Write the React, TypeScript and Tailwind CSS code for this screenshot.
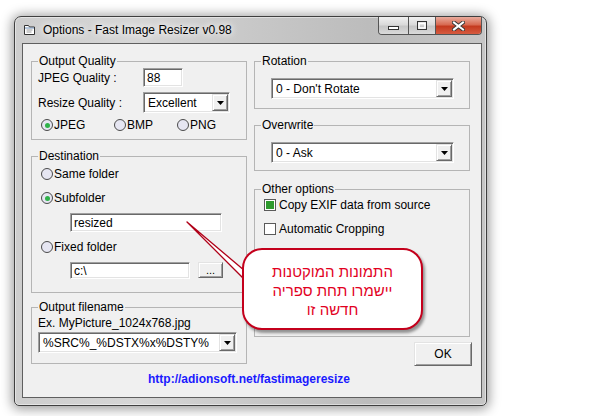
import type { ReactNode } from "react";

const sunken =
  "border border-t-[#a0a0a0] border-l-[#a0a0a0] border-b-white border-r-white shadow-[inset_1px_1px_0_#696969,inset_-1px_-1px_0_#e3e3e3] bg-white";
const raised =
  "border border-t-[#e3e3e3] border-l-[#e3e3e3] border-b-[#696969] border-r-[#696969] shadow-[inset_1px_1px_0_#fff,inset_-1px_-1px_0_#a0a0a0] bg-[#f0f0f0]";

function GroupBox({
  title,
  className = "",
  children,
}: {
  title: string;
  className?: string;
  children: ReactNode;
}) {
  return (
    <fieldset className={`min-w-0 border border-[#b5b5b5] px-[6px] ${className}`}>
      <legend className="px-[1px] text-[12px] leading-[14px]">{title}</legend>
      {children}
    </fieldset>
  );
}

function Radio({ checked = false, label }: { checked?: boolean; label: string }) {
  return (
    <span className="flex h-[14px] items-center gap-[1px]">
      <span className="grid size-[12px] shrink-0 place-items-center rounded-full border border-[#4a4a4a] bg-[#e6e6f2]">
        {checked && <span className="size-[5px] rounded-full bg-[#2fb24a]" />}
      </span>
      <span>{label}</span>
    </span>
  );
}

function Check({ checked = false, label }: { checked?: boolean; label: string }) {
  return (
    <span className="flex h-[14px] items-center gap-[3px]">
      <span className="grid size-[12px] shrink-0 place-items-center border border-[#5a5a5a] bg-white">
        {checked && <span className="size-[8px] bg-[#2e9a2e]" />}
      </span>
      <span>{label}</span>
    </span>
  );
}

function Combo({ value, className = "" }: { value: string; className?: string }) {
  return (
    <div className={`flex items-stretch ${sunken} ${className}`}>
      <span className="flex flex-1 items-center truncate pl-[4px]">{value}</span>
      <span className={`m-[1px] grid w-[16px] place-items-center ${raised}`}>
        <svg width="7" height="4" viewBox="0 0 7 4">
          <path d="M0 0h7L3.5 4z" fill="#000" />
        </svg>
      </span>
    </div>
  );
}

function TitleIcon() {
  return (
    <svg width="11" height="10" viewBox="0 0 11 10" className="shrink-0">
      <path d="M0.5 0.5h4l1 1.5h5v7.5h-10z" fill="#fff" stroke="#333" />
      <path d="M1 3h9" stroke="#6f8fb8" />
      <path d="M2.5 5h6M2.5 7h5" stroke="#9a9a9a" />
    </svg>
  );
}

export default function App() {
  return (
    <div className="relative h-[416px] w-[613px] overflow-hidden bg-white font-['Liberation_Sans',Arial,sans-serif] text-[12px] leading-[14px] text-black">
      <div className="ml-[14px] mt-[16px] flex h-[390px] w-[473px] flex-col rounded-t-[7px] rounded-b-[5px] border border-[#3f3f3f] bg-[linear-gradient(90deg,#cdcdcd_0%,#d6d6d6_25%,#c8c8c8_50%,#bcbcbc_75%,#c6c6c6_100%)] pb-[7px] pl-[7px] pr-[4px] shadow-[0_1px_12px_2px_rgba(0,0,0,0.4),inset_0_0_0_1px_rgba(255,255,255,0.45)]">
        <div className="flex h-[26px] items-center pl-[2px]">
          <TitleIcon />
          <span className="ml-[8px] pb-[1px] text-[12px] [text-shadow:0_0_6px_#fff,0_0_10px_#fff]">
            Options - Fast Image Resizer v0.98
          </span>
          <div className="ml-auto flex h-[18px] self-start overflow-hidden rounded-b-[4px] border border-t-0 border-[#555]">
            <span className="grid w-[29px] place-items-center bg-[linear-gradient(#f0f0f0,#dadada_45%,#c6c6c6_55%,#dadada)] pt-[5px]">
              <svg width="11" height="4" viewBox="0 0 11 4">
                <rect x="0.5" y="0.5" width="10" height="3" fill="#fff" stroke="#333" />
              </svg>
            </span>
            <span className="grid w-[27px] place-items-center border-l border-[#555] bg-[linear-gradient(#f0f0f0,#dadada_45%,#c6c6c6_55%,#dadada)]">
              <svg width="10" height="9" viewBox="0 0 10 9">
                <rect x="0.5" y="0.5" width="9" height="8" fill="none" stroke="#333" />
                <rect x="2" y="2.5" width="6" height="4.5" fill="none" stroke="#fff" strokeWidth="1.5" />
              </svg>
            </span>
            <span className="grid w-[46px] place-items-center border-l border-[#555] bg-[linear-gradient(#e9ab9d,#d86a52_45%,#c43a1f_55%,#d65b40)]">
              <svg width="13" height="10" viewBox="0 0 13 10">
                <path d="M2 1.5l9 7M11 1.5l-9 7" stroke="#3a3a3a" strokeWidth="4" strokeLinecap="square" />
                <path d="M2 1.5l9 7M11 1.5l-9 7" stroke="#fff" strokeWidth="2" strokeLinecap="square" />
              </svg>
            </span>
          </div>
        </div>

        <div className="flex flex-1 flex-col border border-[#5f5f5f] bg-[#f0f0f0] pl-[8px] pt-[10px]">
          <div className="grid grid-cols-[216px_216px] gap-x-[7px]">
            <div className="flex flex-col">
              <GroupBox title="Output Quality" className="pb-[7px]">
                <div className="flex h-[18px] items-center pt-[1px]">
                  <span className="w-[105px]">JPEG Quality :</span>
                  <span className={`flex h-[19px] w-[40px] items-center pl-[3px] ${sunken}`}>88</span>
                </div>
                <div className="mt-[6px] flex h-[21px] items-center">
                  <span className="w-[105px]">Resize Quality :</span>
                  <Combo value="Excellent" className="h-[21px] w-[87px]" />
                </div>
                <div className="ml-[3px] mt-[5px] flex">
                  <span className="w-[73px]">
                    <Radio checked label="JPEG" />
                  </span>
                  <span className="w-[63px]">
                    <Radio label="BMP" />
                  </span>
                  <Radio label="PNG" />
                </div>
              </GroupBox>

              <GroupBox title="Destination" className="mt-[9px] pb-[13px]">
                <div className="ml-[3px] pt-[4px]">
                  <Radio label="Same folder" />
                </div>
                <div className="ml-[3px] mt-[10px]">
                  <Radio checked label="Subfolder" />
                </div>
                <div className={`ml-[32px] mt-[8px] flex h-[19px] w-[152px] items-center pl-[3px] ${sunken}`}>
                  resized
                </div>
                <div className="ml-[3px] mt-[8px]">
                  <Radio label="Fixed folder" />
                </div>
                <div className="ml-[32px] mt-[8px] flex h-[17px] items-start gap-[8px]">
                  <span className={`flex h-[17px] w-[120px] items-center pl-[3px] ${sunken}`}>c:\</span>
                  <span className={`grid h-[16px] w-[25px] place-items-center pb-[4px] text-[11px] ${raised}`}>
                    ...
                  </span>
                </div>
              </GroupBox>

              <GroupBox title="Output filename" className="mt-[7px] pb-[10px]">
                <div className="pt-[2px]">Ex. MyPicture_1024x768.jpg</div>
                <Combo value="%SRC%_%DSTX%x%DSTY%" className="mt-[2px] h-[21px] w-[199px]" />
              </GroupBox>
            </div>

            <div className="flex flex-col">
              <GroupBox title="Rotation" className="pb-[9px]">
                <Combo value="0 - Don't Rotate" className="ml-[10px] mt-[10px] h-[21px] w-[183px]" />
              </GroupBox>
              <GroupBox title="Overwrite" className="mt-[9px] pb-[7px]">
                <Combo value="0 - Ask" className="ml-[10px] mt-[10px] h-[21px] w-[183px]" />
              </GroupBox>
              <GroupBox title="Other options" className="mt-[11px] h-[155px]">
                <div className="ml-[3px] pt-[2px]">
                  <Check checked label="Copy EXIF data from source" />
                </div>
                <div className="ml-[3px] mt-[10px]">
                  <Check label="Automatic Cropping" />
                </div>
              </GroupBox>
              <button
                className={`-mr-[2px] mt-[5px] h-[24px] w-[58px] self-end text-[12px] ${raised}`}
              >
                OK
              </button>
            </div>
          </div>
          <a className="ml-[117px] mt-[6px] font-bold text-[#1a1aff]">
            http://adionsoft.net/fastimageresize
          </a>
        </div>
      </div>

      <svg className="absolute left-0 top-0" width="613" height="416" viewBox="0 0 613 416">
        <path d="M189 224L247 274L247 283Z" fill="#777" opacity="0.45" />
        <path d="M187 222L245 271L245 280Z" fill="#fff" stroke="#b00018" strokeWidth="1.3" strokeLinejoin="round" />
      </svg>
      <div
        dir="rtl"
        className="absolute left-[242px] top-[248px] flex h-[82px] w-[181px] flex-col items-center rounded-[20px] border-2 border-[#c4001c] bg-white pt-[12px] text-[15px] leading-[19px] text-[#e2001e] shadow-[2px_3px_3px_rgba(0,0,0,0.4)]"
      >
        <span>התמונות המוקטנות</span>
        <span>יישמרו תחת ספריה</span>
        <span>חדשה זו</span>
      </div>
    </div>
  );
}
